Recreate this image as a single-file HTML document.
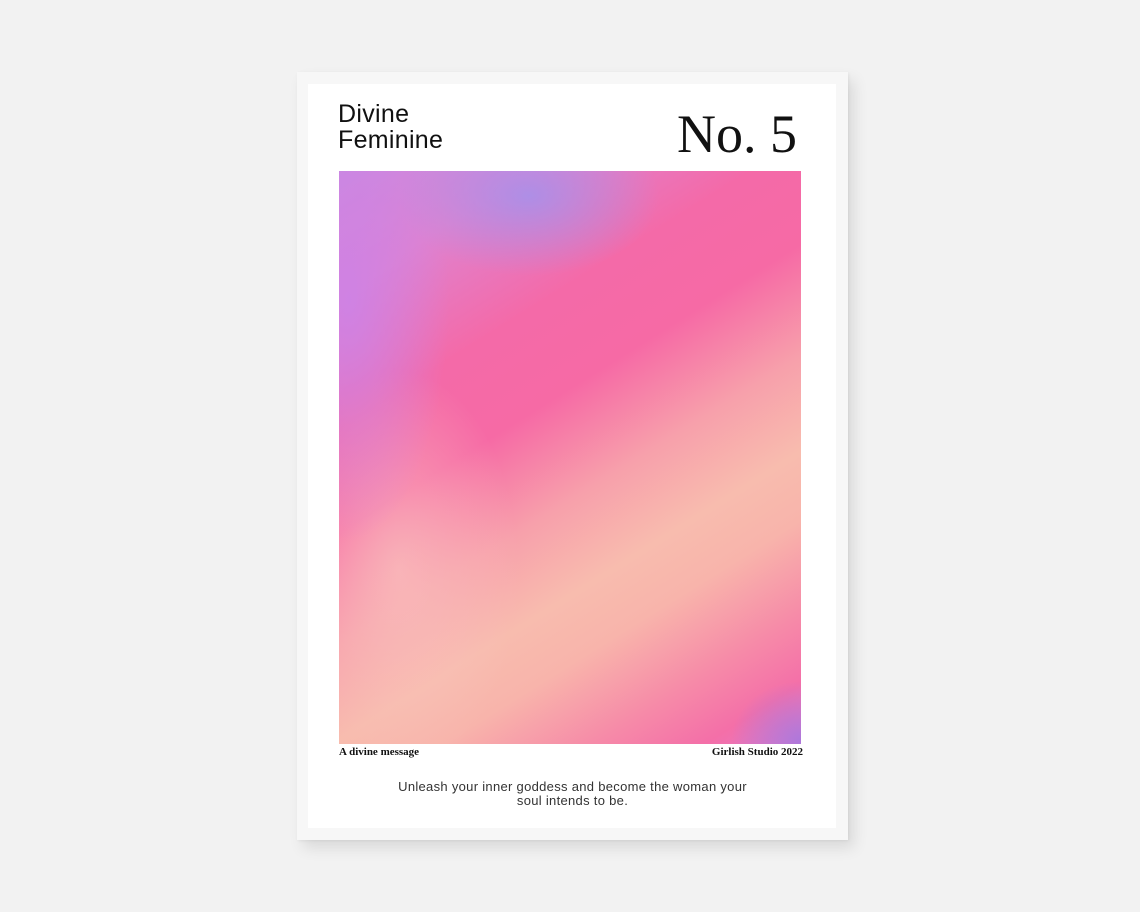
<!DOCTYPE html>
<html><head><meta charset="utf-8"><style>
body{margin:0;width:1140px;height:912px;background:#f2f2f2;position:relative;overflow:hidden;font-family:"Liberation Serif",serif}
.frame{position:absolute;left:297px;top:72px;width:551px;height:768px;background:#f7f7f7;box-shadow:6px 8px 14px rgba(0,0,0,0.10),1px 1px 3px rgba(0,0,0,0.06)}
.paper{position:absolute;left:308px;top:84px;width:528px;height:744px;background:#fff}
.art{position:absolute;left:339px;top:171px;width:462px;height:573px;overflow:hidden;
background:
radial-gradient(ellipse 130px 80px at 190px 25px,rgba(165,145,235,0.85),rgba(165,145,235,0) 100%),
radial-gradient(ellipse 100px 240px at 10px 130px,rgba(205,130,230,0.9),rgba(205,130,230,0) 100%),
radial-gradient(ellipse 70px 60px at 462px 570px,rgba(170,120,220,0.95),rgba(170,120,220,0) 100%),
radial-gradient(ellipse 120px 200px at 60px 400px,rgba(250,195,190,0.7),rgba(250,195,190,0) 100%),
linear-gradient(148deg,#c98ae0 0%,#df82cf 14%,#f46aa8 30%,#f66aa5 42%,#f7a0ab 55%,#f8bcae 66%,#f8b4ab 74%,#f68aa8 85%,#f46fa8 93%,#e57ac8 100%);}
.t1{position:absolute;left:338px;top:101px;font-size:25px;line-height:26px;color:#111;font-family:"Liberation Sans",sans-serif;font-weight:300;letter-spacing:0.3px}
.no{position:absolute;left:677px;top:104px;font-size:54px;line-height:60px;color:#111}
.s{position:absolute;top:746px;font-size:11px;font-weight:bold;color:#111}
.q{position:absolute;left:340px;width:465px;top:780px;text-align:center;font-size:13px;line-height:14px;color:#333;font-family:"Liberation Sans",sans-serif;letter-spacing:0.3px}
</style></head><body>
<div class="frame"></div><div class="paper"></div>
<div class="t1">Divine<br>Feminine</div>
<div class="no">No. 5</div>
<div class="art"></div>
<div class="s" style="left:339px">A divine message</div>
<div class="s" style="right:337px">Girlish Studio 2022</div>
<div class="q">Unleash your inner goddess and become the woman your<br>soul intends to be.</div>
</body></html>
